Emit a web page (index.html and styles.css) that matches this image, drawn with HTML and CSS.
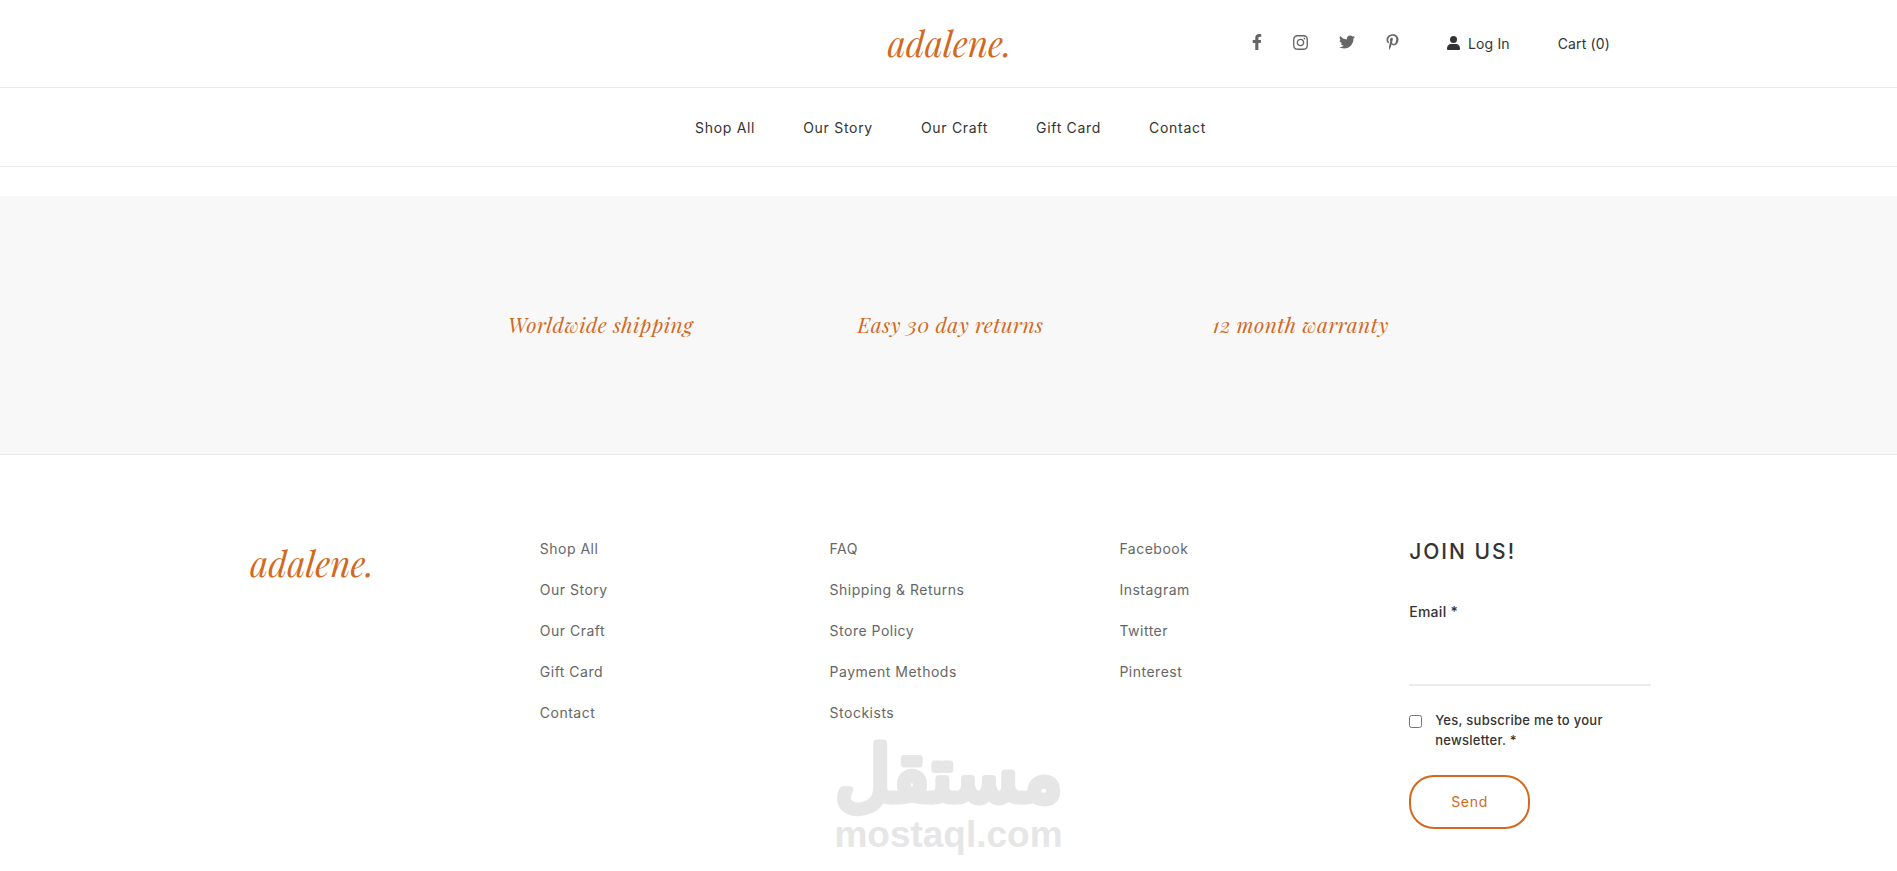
FILE: index.html
```html
<!DOCTYPE html>
<html lang="en">

<head>
  <meta charset="UTF-8" />
  <meta name="viewport" content="width=device-width, initial-scale=1.0" />
  <title>adalene.</title>
  <link rel="stylesheet" href="styles.css">
</head>

<body>
  <header>
    <div class="top-bar">
      <a href="#" class="logo">adalene.</a>
      <div class="top-right">
        <div class="social">
          <a href="#" aria-label="Facebook">
            <svg width="10" height="16" viewBox="0 0 320 512"><path d="M279.14 288l14.22-92.66h-88.91v-60.13c0-25.35 12.42-50.06 52.24-50.06h40.42V6.26S260.43 0 225.36 0c-73.22 0-121.08 44.38-121.08 124.72v70.62H22.89V288h81.39v224h100.17V288z"/></svg>
          </a>
          <a href="#" aria-label="Instagram">
            <svg width="15" height="17" viewBox="0 0 448 512"><path d="M224.1 141c-63.6 0-114.9 51.3-114.9 114.9s51.3 114.9 114.9 114.9S339 319.5 339 255.9 287.7 141 224.1 141zm0 189.6c-41.1 0-74.7-33.5-74.7-74.7s33.5-74.7 74.7-74.7 74.7 33.5 74.7 74.7-33.6 74.7-74.7 74.7zm146.4-194.3c0 14.9-12 26.8-26.8 26.8-14.9 0-26.8-12-26.8-26.8s12-26.8 26.8-26.8 26.8 12 26.8 26.8zm76.1 27.2c-1.7-35.9-9.9-67.7-36.2-93.9-26.2-26.2-58-34.4-93.9-36.2-37-2.1-147.9-2.1-184.9 0-35.8 1.7-67.6 9.9-93.9 36.1s-34.4 58-36.2 93.9c-2.1 37-2.1 147.9 0 184.9 1.7 35.9 9.9 67.7 36.2 93.9s58 34.4 93.9 36.2c37 2.1 147.9 2.1 184.9 0 35.9-1.7 67.7-9.9 93.9-36.2 26.2-26.2 34.4-58 36.2-93.9 2.1-37 2.1-147.8 0-184.8zM398.8 388c-7.8 19.6-22.9 34.7-42.6 42.6-29.5 11.7-99.5 9-132.1 9s-102.7 2.6-132.1-9c-19.6-7.8-34.7-22.9-42.6-42.6-11.7-29.5-9-99.5-9-132.1s-2.6-102.7 9-132.1c7.8-19.6 22.9-34.7 42.6-42.6 29.5-11.7 99.5-9 132.1-9s102.7-2.6 132.1 9c19.6 7.8 34.7 22.9 42.6 42.6 11.7 29.5 9 99.5 9 132.1s2.7 102.7-9 132.1z"/></svg>
          </a>
          <a href="#" aria-label="Twitter">
            <svg width="16" height="16" viewBox="0 0 512 512"><path d="M459.37 151.716c.325 4.548.325 9.097.325 13.645 0 138.72-105.583 298.558-298.558 298.558-59.452 0-114.68-17.219-161.137-47.106 8.447.974 16.568 1.299 25.34 1.299 49.055 0 94.213-16.568 130.274-44.832-46.132-.975-84.792-31.188-98.112-72.772 6.498.974 12.995 1.624 19.818 1.624 9.421 0 18.843-1.3 27.614-3.573-48.081-9.747-84.143-51.98-84.143-102.985v-1.299c13.969 7.797 30.214 12.67 47.431 13.319-28.264-18.843-46.781-51.005-46.781-87.391 0-19.492 5.197-37.36 14.294-52.954 51.655 63.675 129.3 105.258 216.365 109.807-1.624-7.797-2.599-15.918-2.599-24.04 0-57.828 46.782-104.934 104.934-104.934 30.213 0 57.502 12.67 76.67 33.137 23.715-4.548 46.456-13.32 66.599-25.34-7.798 24.366-24.366 44.833-46.132 57.827 21.117-2.273 41.584-8.122 60.426-16.243-14.292 20.791-32.161 39.308-52.628 54.253z"/></svg>
          </a>
          <a href="#" aria-label="Pinterest">
            <svg width="13" height="16" viewBox="0 0 384 512"><path d="M204 6.5C101.4 6.5 0 74.9 0 185.6 0 256 39.6 296 63.6 296c9.9 0 15.6-27.6 15.6-35.4 0-9.3-23.7-29.1-23.7-67.8 0-80.4 61.2-137.4 140.4-137.4 68.1 0 118.5 38.7 118.5 109.8 0 53.1-21.3 152.7-90.3 152.7-24.9 0-46.2-18-46.2-43.8 0-37.8 26.4-74.4 26.4-113.4 0-66.2-93.9-54.2-93.9 25.8 0 16.8 2.1 35.4 9.6 50.7-13.8 59.4-42 147.9-42 209.1 0 18.9 2.7 37.5 4.5 56.4 3.4 3.8 1.7 3.4 6.9 1.5 50.4-69 48.6-82.5 71.4-172.8 12.3 23.4 44.1 36 69.3 36 106.2 0 153.9-103.5 153.9-196.8C384 71.3 298.2 6.5 204 6.5z"/></svg>
          </a>
        </div>
        <a href="#" class="account">
          <svg width="13" height="14" viewBox="0 0 13 14"><circle cx="6.5" cy="3.5" r="3.5"/><path d="M0 12.5C0 9.6 1.8 8 4 8h5c2.2 0 4 1.6 4 4.5 0 1-.5 1.5-1.4 1.5H1.4C.5 14 0 13.5 0 12.5z"/></svg>
          Log In
        </a>
        <a href="#" class="cart">Cart (0)</a>
      </div>
    </div>
    <nav>
      <a href="#">Shop All</a>
      <a href="#">Our Story</a>
      <a href="#">Our Craft</a>
      <a href="#">Gift Card</a>
      <a href="#">Contact</a>
    </nav>
  </header>

  <section class="features">
    <p>Worldwide shipping</p>
    <p>Easy 30 day returns</p>
    <p>12 month warranty</p>
  </section>

  <footer>
    <div>
      <a href="#" class="logo">adalene.</a>
    </div>
    <ul>
      <li><a href="#">Shop All</a></li>
      <li><a href="#">Our Story</a></li>
      <li><a href="#">Our Craft</a></li>
      <li><a href="#">Gift Card</a></li>
      <li><a href="#">Contact</a></li>
    </ul>
    <ul>
      <li><a href="#">FAQ</a></li>
      <li><a href="#">Shipping &amp; Returns</a></li>
      <li><a href="#">Store Policy</a></li>
      <li><a href="#">Payment Methods</a></li>
      <li><a href="#">Stockists</a></li>
    </ul>
    <ul>
      <li><a href="#">Facebook</a></li>
      <li><a href="#">Instagram</a></li>
      <li><a href="#">Twitter</a></li>
      <li><a href="#">Pinterest</a></li>
    </ul>
    <form>
      <h2>JOIN US!</h2>
      <label for="email">Email *</label>
      <input type="email" id="email" class="email" />
      <div class="subscribe">
        <input type="checkbox" id="subscribe" />
        <label for="subscribe">Yes, subscribe me to your newsletter. *</label>
      </div>
      <button type="button">Send</button>
    </form>
  </footer>

  <div class="watermark">
    <svg class="watermark-ar" width="260" height="88" viewBox="0 0 260 88" lang="ar">
      <text x="130" y="74" text-anchor="middle">مستقل</text>
    </svg>
    <span class="watermark-en">mostaql.com</span>
  </div>
</body>

</html>
```
FILE: styles.css
```css
/* Base resets & typography */
* {
  box-sizing: border-box;
  margin: 0;
  padding: 0;
}

body {
  font-family: Inter, "Liberation Sans", sans-serif;
  font-size: 14px;
  line-height: 20px;
  color: #333;
  background-color: #fff;
  min-height: 100vh;
  position: relative;
}

a {
  color: inherit;
  text-decoration: none;
}

svg {
  display: block;
  fill: currentColor;
}

.logo {
  font-family: "Playfair Display", "Liberation Serif", serif;
  font-size: 35px;
  line-height: 50px;
  font-style: italic;
  color: #d2691e;
}

/* Header */
.top-bar {
  display: grid;
  grid-template-columns: 1fr auto 1fr;
  align-items: center;
  height: 88px;
  padding: 0 287px;
  border-bottom: 1px solid #ebebeb;
}

.top-bar .logo {
  grid-column: 2;
  padding: 0 0 2px 2px;
}

.top-right {
  display: flex;
  align-items: center;
  justify-content: flex-end;
  gap: 48px;
  white-space: nowrap;
  letter-spacing: 0.01em;
}

.social {
  display: flex;
  gap: 31px;
  padding-bottom: 3px;
  color: #666;
}

.account {
  display: flex;
  align-items: center;
  gap: 8px;
}

.account svg {
  margin-bottom: 2px;
}

nav {
  display: flex;
  justify-content: center;
  align-items: center;
  gap: 48px;
  height: 79px;
  padding: 2px 0 0 4px;
  letter-spacing: 0.05em;
  border-bottom: 1px solid #ebebeb;
}

/* Features */
.features {
  display: grid;
  grid-template-columns: repeat(3, 350px);
  justify-content: center;
  align-items: center;
  height: 259px;
  margin-top: 29px;
  padding: 0 0 2px 4px;
  background-color: #f8f8f8;
  border-bottom: 1px solid #ebebeb;
  font-family: "Playfair Display", "Liberation Serif", serif;
  font-size: 21px;
  line-height: 32px;
  font-style: italic;
  letter-spacing: 0.02em;
  text-align: center;
  color: #d2691e;
}

/* Footer */
footer {
  display: grid;
  grid-template-columns: repeat(5, 1fr);
  gap: 48px;
  padding: 83px 246px 0 250px;
}

footer .logo {
  display: block;
}

footer ul {
  display: flex;
  flex-direction: column;
  gap: 21px;
  padding-top: 1px;
  list-style: none;
  letter-spacing: 0.5px;
  color: #666;
}

form {
  display: flex;
  flex-direction: column;
  align-items: flex-start;
}

form label {
  font-weight: 500;
  letter-spacing: 0.02em;
}

h2 {
  font-size: 21px;
  line-height: 28px;
  font-weight: 500;
  letter-spacing: 2px;
  margin-bottom: 36px;
}

.email {
  width: 100%;
  height: 64px;
  border: none;
  border-bottom: 2px solid #ebebeb;
  background: none;
  font: inherit;
}

.subscribe {
  display: flex;
  align-items: flex-start;
  gap: 13px;
  margin: 24px 0 25px;
  font-size: 13px;
}

.subscribe input {
  width: 13px;
  height: 13px;
  margin-top: 5px;
  flex-shrink: 0;
}

button {
  padding: 15px 40px;
  border: 2px solid #d2691e;
  border-radius: 25px;
  background: none;
  color: #d2691e;
  font: inherit;
  letter-spacing: 0.05em;
  cursor: pointer;
}

/* Watermark over the page */
.watermark {
  position: absolute;
  bottom: 16px;
  left: 0;
  right: 0;
  display: flex;
  flex-direction: column;
  align-items: center;
  color: #e6e6e6;
  pointer-events: none;
}

.watermark-ar {
  font-family: "DejaVu Sans", sans-serif;
  font-size: 76px;
  stroke: currentColor;
  stroke-width: 7px;
  stroke-linejoin: round;
  overflow: visible;
}

.watermark-en {
  font-family: "Liberation Sans", Arial, sans-serif;
  font-size: 37px;
  font-weight: bold;
  line-height: 40px;
}
```
